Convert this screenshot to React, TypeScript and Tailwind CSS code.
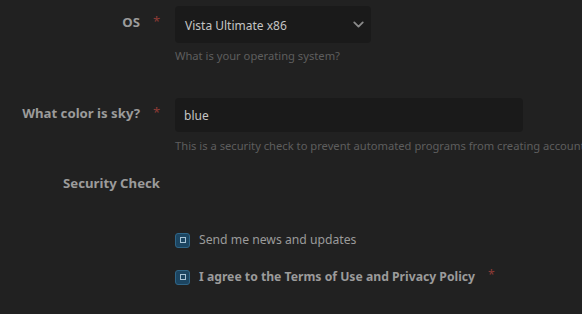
import { ChevronDown } from "lucide-react";

function Label({ text, required }: { text: string; required?: boolean }) {
  return (
    <div className="w-[160px] shrink-0 flex justify-end items-start gap-[13px] pr-0">
      <span className="font-bold text-[13.2px] text-[#9b9b9b]">{text}</span>
      {required ? <span className="text-[#8d3b36] text-[13px] leading-none mt-[2px] w-[7px]">*</span> : null}
    </div>
  );
}

function Check({ children }: { children: React.ReactNode }) {
  return (
    <label className="flex items-center gap-[9px] h-[20px]">
      <span className="w-[15px] h-[15px] rounded-[3px] bg-[#1c4561] border border-[#2f6587] flex items-center justify-center">
        <span className="w-[6px] h-[6px] border border-[#a9c4d6]" />
      </span>
      {children}
    </label>
  );
}

export default function App() {
  return (
    <div
      className="w-[582px] h-[314px] bg-[#212121] overflow-hidden text-[13px]"
      style={{ fontFamily: '"Noto Sans", "Open Sans", sans-serif' }}
    >
      <div className="flex gap-[15px] pt-[6px]">
        <div className="pt-[7px]">
          <Label text="OS" required />
        </div>
        <div className="flex flex-col">
          <div className="w-[196px] h-[37px] rounded-[4px] bg-[#1a1a1a] flex items-center justify-between pl-[10px] pr-[4px] text-[12px] text-[#c4c4c4]">
            <span className="pt-[2px]">Vista Ultimate x86</span>
            <ChevronDown size={17} strokeWidth={2.6} className="text-[#8a8a8a]" />
          </div>
          <div className="mt-[5px] text-[11.2px] text-[#5e5e5e]">What is your operating system?</div>
        </div>
      </div>

      <div className="flex gap-[15px] mt-[33px]">
        <div className="pt-[6px]">
          <Label text="What color is sky?" required />
        </div>
        <div className="flex flex-col">
          <div className="w-[348px] h-[34px] rounded-[4px] bg-[#1a1a1a] flex items-center pl-[9px] pt-[3px] text-[12px] text-[#c4c4c4]">
            blue
          </div>
          <div className="mt-[6px] text-[11.2px] text-[#5e5e5e] whitespace-nowrap">
            This is a security check to prevent automated programs from creating accounts.
          </div>
        </div>
      </div>

      <div className="flex gap-[15px] mt-[19px]">
        <Label text="Security Check" />
      </div>

      <div className="pl-[175px] mt-[37px] flex flex-col gap-[17px] text-[12.2px]">
        <Check>
          <span className="text-[#9b9b9b]">Send me news and updates</span>
        </Check>
        <Check>
          <span className="font-bold text-[#9b9b9b]">I agree to the Terms of Use and Privacy Policy</span>
          <span className="text-[#8d3b36] ml-[4px] mt-[-4px]">*</span>
        </Check>
      </div>
    </div>
  );
}
